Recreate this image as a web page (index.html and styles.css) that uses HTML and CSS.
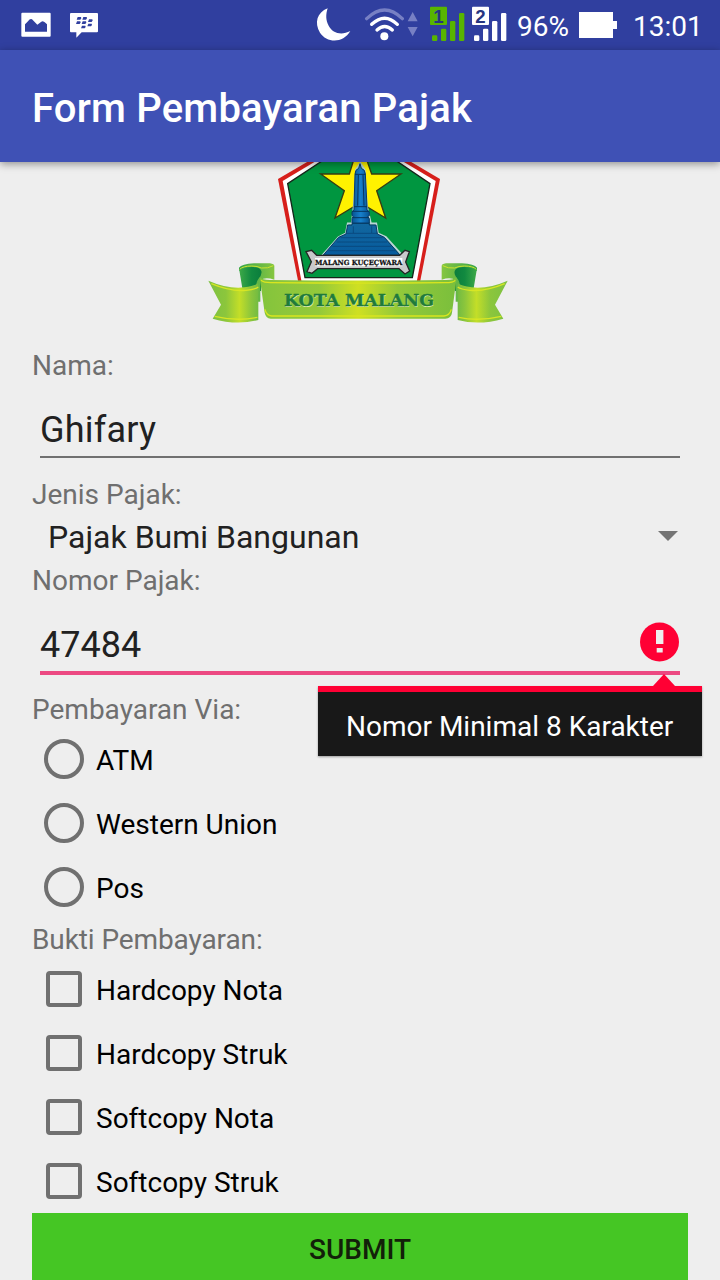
FILE: index.html
```html
<!DOCTYPE html>
<html lang="id">
<head>
<meta charset="utf-8">
<title>Form Pembayaran Pajak</title>
<link rel="stylesheet" href="styles.css">
</head>
<body>
<div class="screen">
  <header class="status">
    <svg width="90" height="50" viewBox="0 0 270 150">
      <path fill="#fff" fill-rule="evenodd" d="M7 38h82q3 0 3 3v66q0 3-3 3H7q-3 0-3-3V41q0-3 3-3zM15 95h66V73q-12-13-17-8L52 74 36 58q-6-3-12 6l-9 9z"/>
      <path fill="#fff" d="M153 39h78q3 0 3 3v52q0 3-3 3h-46l-16 16V97h-16q-3 0-3-3V42q0-3 3-3z"/>
      <g fill="#303f9f">
        <path id="seed" d="M173 51h10q3 3-2 8h-11z"/>
        <use href="#seed" x="17"/><use href="#seed" x="-2" y="13"/><use href="#seed" x="15" y="13"/>
        <use href="#seed" x="34" y="7"/><use href="#seed" x="32" y="20"/><use href="#seed" x="13" y="26"/>
      </g>
    </svg>
    <div class="status-right">
      <svg width="215" height="50" viewBox="0 0 645 150">
        <path fill="#fff" d="M83 25C51 37 42 69 60 98c20 31 69 33 91-5-27 14-53 7-65-16-9-16-9-34-3-52z"/>
        <g fill="none" stroke="#fff" stroke-width="10" stroke-linecap="round">
          <path stroke="#7780c4" d="M200 56q54-52 107 0"/>
          <path d="M215 73q39-37 77 0"/>
          <path d="M231 90q23-21 46 0"/>
        </g>
        <circle cx="253" cy="109" r="12" fill="#fff"/>
        <path fill="#7780c4" d="M338 36l15 28h-30zM323 81h30l-15 28z"/>
        <g fill="#58b500">
          <rect x="390" y="20" width="51" height="55" rx="3"/>
          <rect x="396" y="106" width="16" height="17" rx="4"/><rect x="423" y="86" width="16" height="37" rx="4"/>
          <rect x="450" y="63" width="16" height="60" rx="4"/><rect x="477" y="39" width="16" height="84" rx="4"/>
        </g>
        <g fill="#fff">
          <rect x="516" y="20" width="51" height="55" rx="3"/>
          <rect x="522" y="106" width="16" height="17" rx="4"/><rect x="549" y="86" width="16" height="37" rx="4"/>
          <rect x="576" y="63" width="16" height="60" rx="4"/><rect x="603" y="39" width="16" height="84" rx="4"/>
        </g>
        <g class="sim"><text x="415" y="68">1</text><text x="541" y="68">2</text></g>
      </svg>
      <span class="percent">96%</span>
      <svg class="battery" width="38" height="26" viewBox="0 0 38 26"><path fill="#fff" d="M0 0h34v9h4v8h-4v9H0z"/></svg>
      <span class="clock">13:01</span>
    </div>
  </header>
  <div class="appbar"><h1>Form Pembayaran Pajak</h1></div>

  <main class="form">
    <svg class="logo" width="320" height="185" viewBox="0 21 960 555">
      <defs>
        <linearGradient id="band"><stop offset="0" stop-color="#82c43c"/><stop offset=".12" stop-color="#8cc63c"/><stop offset=".3" stop-color="#93c93a"/><stop offset=".5" stop-color="#cfe022"/><stop offset=".7" stop-color="#93c93a"/><stop offset="1" stop-color="#7abf3c"/></linearGradient>
        <linearGradient id="tail"><stop offset="0" stop-color="#7cc142"/><stop offset=".35" stop-color="#8cc63c"/><stop offset=".62" stop-color="#c3de28"/><stop offset=".85" stop-color="#8cc63c"/><stop offset="1" stop-color="#72bb42"/></linearGradient>
        <linearGradient id="fold"><stop offset="0" stop-color="#3faa48"/><stop offset=".4" stop-color="#128a40"/><stop offset="1" stop-color="#04733a"/></linearGradient>
        <linearGradient id="curl"><stop offset="0" stop-color="#35a549"/><stop offset=".5" stop-color="#5fb546"/><stop offset="1" stop-color="#86c640"/></linearGradient>
        <linearGradient id="base" x2="0" y2="1"><stop offset="0" stop-color="#12679f"/><stop offset="1" stop-color="#075b9d"/></linearGradient>
        <linearGradient id="column"><stop offset="0" stop-color="#075292"/><stop offset=".5" stop-color="#1780cc"/><stop offset="1" stop-color="#075292"/></linearGradient>
      </defs>
      <path fill="#d71f1b" d="M234 72L340 10h275l105 62-60 310H295z"/>
      <path fill="#fff" d="M248 78L350 17h255l102 61-57 304H305z"/>
      <path fill="#009640" stroke="#14261a" stroke-width="4" d="M263 86L375 12h206l109 74-53 282H315z"/>
      <path fill="#fff200" stroke="#363c12" stroke-width="4" d="M362 57h86L464 5h33l18 52h88l-73 50 27 82-76-46-76 46 28-82z"/>
      <path fill="none" stroke="#b9d5d5" stroke-width="7" d="M469 44l12-18 12 18 7 110 12 52h16l5 30 24 11 49 54H368l48-54 22-11 6-30h12l6-52z"/>
      <path fill="url(#base)" stroke="#073a66" stroke-width="3" d="M456 205h52v5h20l4 27 21 10 47 53H370l46-53 22-10 5-27h13z"/>
      <path stroke="#073f71" stroke-width="2" d="M439 235h94M422 248h126M410 261h151M397 274h176M385 287h200M460 214v20M515 214v20"/>
      <path fill="url(#column)" stroke="#063b68" stroke-width="3" d="M465 57q0-13 11-17l4-14 4 14q12 4 12 17l5 97v11l7 5v12l-5 3 5 6v13h-52v-13l5-6-5-3v-12l6-5v-11z"/>
      <path stroke="#06345d" stroke-width="3" d="M465 58h31M462 155h39M456 169h51M456 188h51M475 60l-2 92M489 60l3 92"/>
      <path fill="#c8c9cb" stroke="#252525" stroke-width="4" d="M318 290l17-4 15 15h249l16-15 13 4-11 31 12 27-14 9-18-16H353l-17 14-15-5 13-30z"/>
      <path fill="#fff" d="M345 309h262v25H345z"/>
      <text class="motto" x="345" y="329" textLength="262" lengthAdjust="spacingAndGlyphs">MALANG KUÇEÇWARA</text>
      <g id="ribbon-end">
        <path fill="url(#fold)" d="M117 340q14-12 50-12 28 0 42 4 0 20-26 36v40l-55-2z"/>
        <path fill="url(#curl)" d="M117 338q8-11 45-13h48q14 2 13 9v40q-28-9-42 2v64h-13q-4-56 7-68 12-13 9-24-3-10-24-12-26-2-43 12z"/>
        <path fill="none" stroke="#cde42e" stroke-width="3" d="M119 343q10-10 36-10 18 0 29 6 20 2 36-7"/>
        <path fill="url(#tail)" d="M25 377q60 26 108 20 32-4 41-12 3 10 1 40v70q-65 17-137-4l25-42z"/>
        <path fill="none" stroke="#d8e624" stroke-width="4" d="M34 386q56 24 104 20 28-3 37-10M44 484q68 16 128 3"/>
      </g>
      <use href="#ribbon-end" transform="matrix(-1 0 0 1 948 0)"/>
      <path fill="url(#band)" d="M179 367q8 8 31 8 270 3 528 0 24 0 32-8l-14 106q-2 16-20 18H212q-15-2-18-18z"/>
      <path fill="none" stroke="#d9e51f" stroke-width="4" d="M183 376q8 7 29 7 270 3 524 0 24 0 30-7M195 463q4 18 20 20h517q17-2 22-20"/>
      <g class="city"><text x="254" y="457" textLength="450" lengthAdjust="spacingAndGlyphs" fill="#dcebac">KOTA MALANG</text><text class="front" x="252" y="453" textLength="450" lengthAdjust="spacingAndGlyphs">KOTA MALANG</text></g>
    </svg>

    <label class="label first">Nama:</label>
    <div class="field name">Ghifary</div>
    <label class="label">Jenis Pajak:</label>
    <div class="spinner"><span>Pajak Bumi Bangunan</span><i class="caret"></i></div>
    <label class="label">Nomor Pajak:</label>
    <div class="field focused">
      <span>47484</span>
      <svg class="error-icon" width="40" height="40" viewBox="0 0 40 40"><circle cx="19.5" cy="20" r="19.5" fill="#ff0034"/><path fill="#eee" d="M16 8h7.4v14H16zM16.7 26h6v4.5h-6z"/></svg>
      <div class="tooltip">Nomor Minimal 8 Karakter</div>
    </div>
    <div class="label">Pembayaran Via:</div>
    <div class="option"><i class="radio"></i>ATM</div>
    <div class="option"><i class="radio"></i>Western Union</div>
    <div class="option"><i class="radio"></i>Pos</div>
    <div class="label proof">Bukti Pembayaran:</div>
    <div class="option"><i class="check"></i>Hardcopy Nota</div>
    <div class="option"><i class="check"></i>Hardcopy Struk</div>
    <div class="option"><i class="check"></i>Softcopy Nota</div>
    <div class="option"><i class="check"></i>Softcopy Struk</div>
    <div class="submit">SUBMIT</div>
  </main>
</div>
</body>
</html>
```
FILE: styles.css
```css
* { box-sizing: border-box; }
body { margin: 0; background: #eee; font-family: Roboto, sans-serif; }
svg { display: block; flex: none; }
.screen { width: 720px; height: 1280px; overflow: hidden; display: flex; flex-direction: column; }
.status { flex: none; height: 50px; background: #303f9f; display: flex; justify-content: space-between; padding-left: 20px; }
.status-right { display: flex; width: 420px; color: #fff; font-size: 28px; line-height: 53px; }
.percent { width: 62px; padding-left: 2px; white-space: nowrap; }
.battery { margin: 12px 0 0 2px; }
.clock { margin-left: 16px; }
.sim { font: bold 56px "Liberation Sans", sans-serif; text-anchor: middle; fill: #273681; }
.appbar { flex: none; height: 112px; padding-left: 32px; background: #3f51b5; color: #fff; box-shadow: 0 2px 8px rgba(0,0,0,.4); position: relative; z-index: 1; }
.appbar h1 { margin: 0; font-size: 40px; font-weight: 500; line-height: 118px; letter-spacing: .2px; white-space: nowrap; }
.form { flex: none; padding: 0 32px; display: flex; flex-direction: column; }
.logo { margin-left: 168px; }
.motto { font: bold 21px "DejaVu Serif", serif; fill: #111; stroke: #111; stroke-width: .8px; }
.city { font: bold 51px "DejaVu Serif", serif; }
.city .front { fill: #207b3a; stroke: #207b3a; stroke-width: 1px; }
.label { height: 38px; line-height: 40px; font-size: 28px; color: #6f6f6f; }
.label.first { line-height: 38px; }
.label.proof { letter-spacing: -.1px; }
.field { height: 90px; margin: 0 8px; padding-bottom: 17px; font-size: 36px; line-height: 90px; color: #212121; position: relative; display: flex; justify-content: space-between; }
.field.name { letter-spacing: .2px; }
.field::after { content: ""; position: absolute; left: 0; right: 0; bottom: 17px; height: 2px; background: #707070; }
.field.focused { height: 91px; line-height: 92px; }
.field.focused::after { height: 4px; bottom: 15px; background: #ec4982; }
.error-icon { margin-top: 23px; }
.tooltip { position: absolute; z-index: 2; right: -22px; top: 87px; width: 384px; height: 70px; border-top: 6px solid #ff0034; background: #181818; color: #fff; font-size: 28px; line-height: 70px; padding-left: 28px; white-space: nowrap; box-shadow: 0 1px 2px rgba(0,0,0,.35); }
.tooltip::before { content: ""; position: absolute; right: 27px; top: -18px; border: solid transparent; border-width: 0 11px 12px; border-bottom-color: #ff0034; }
.spinner { height: 48px; padding: 0 10px 0 16px; display: flex; align-items: center; justify-content: space-between; font-size: 32px; color: #212121; }
.caret { border: solid transparent; border-width: 10px 10px 0; border-top-color: #747474; margin-top: -3px; }
.option { height: 64px; padding-left: 12px; display: flex; align-items: center; gap: 12px; font-size: 28px; color: #000; }
.radio { width: 40px; height: 40px; border: 4px solid #707070; border-radius: 50%; margin-top: -2px; }
.check { width: 36px; height: 36px; margin: -2px 2px 0; border: 4px solid #707070; border-radius: 4px; }
.submit { height: 72px; margin-top: -1px; background: #45c624; color: #122009; text-align: center; font-size: 28px; font-weight: 500; line-height: 74px; }
```
